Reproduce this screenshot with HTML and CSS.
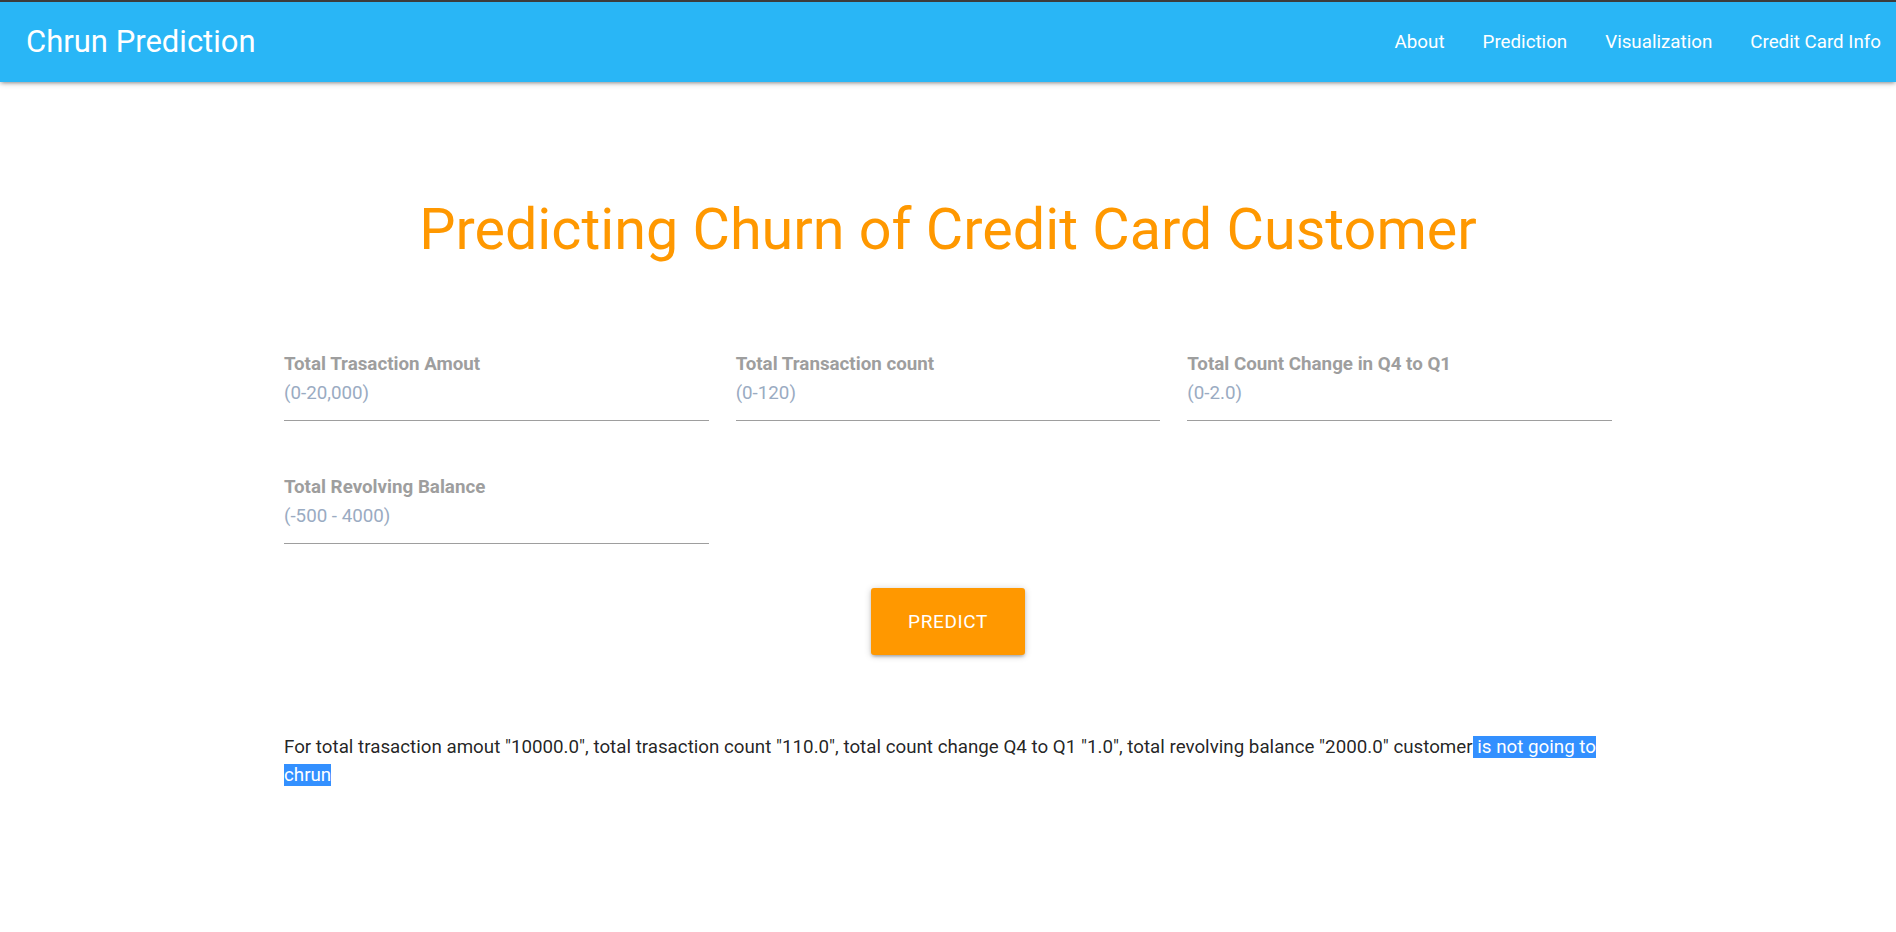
FILE: index.html
```html
<!DOCTYPE html>
<html lang="en">
<head>
<meta charset="utf-8">
<title>Chrun Prediction</title>
<link rel="stylesheet" href="styles.css">
</head>
<body>
<nav class="navbar">
  <a class="brand" href="#">Chrun Prediction</a>
  <ul class="nav-links">
    <li><a href="#">About</a></li>
    <li><a href="#">Prediction</a></li>
    <li><a href="#">Visualization</a></li>
    <li><a href="#">Credit Card Info</a></li>
  </ul>
</nav>
<main class="container">
  <h1 class="title">Predicting Churn of Credit Card Customer</h1>
  <form class="form">
    <div class="field">
      <label class="label" for="amt">Total Trasaction Amout</label>
      <input class="input" id="amt" type="text" placeholder="(0-20,000)">
    </div>
    <div class="field">
      <label class="label" for="cnt">Total Transaction count</label>
      <input class="input" id="cnt" type="text" placeholder="(0-120)">
    </div>
    <div class="field">
      <label class="label" for="chg">Total Count Change in Q4 to Q1</label>
      <input class="input" id="chg" type="text" placeholder="(0-2.0)">
    </div>
    <div class="field">
      <label class="label" for="bal">Total Revolving Balance</label>
      <input class="input" id="bal" type="text" placeholder="(-500 - 4000)">
    </div>
  </form>
  <div class="actions">
    <button class="btn" type="button">Predict</button>
  </div>
  <p class="result">For total trasaction amout "10000.0", total trasaction count "110.0", total count change Q4 to Q1 "1.0", total revolving balance "2000.0" customer<span class="sel"> is not going to chrun</span></p>
</main>
</body>
</html>
```
FILE: styles.css
```css
* { box-sizing: border-box; }
html, body { margin: 0; padding: 0; }
body {
  font-family: Roboto, "Noto Sans", "Liberation Sans", sans-serif;
  background: #fff;
  color: rgba(0,0,0,0.87);
}
.navbar {
  display: flex;
  align-items: center;
  justify-content: space-between;
  height: 82px;
  border-top: 2px solid #3c3c3c;
  background: #29b6f6;
  box-shadow: 0 2px 3px 0 rgba(0,0,0,0.14), 0 4px 2px -3px rgba(0,0,0,0.12), 0 1px 7px 0 rgba(0,0,0,0.2);
  padding: 0 15px 0 26px;
}
.brand {
  color: #fff;
  text-decoration: none;
  font-size: 31px;
  line-height: 80px;
}
.nav-links {
  display: flex;
  list-style: none;
  margin: 0;
  padding: 0;
}
.nav-links a {
  display: block;
  color: #fff;
  text-decoration: none;
  font-size: 18.75px;
  line-height: 80px;
  padding: 0 19px;
}
.nav-links li:last-child a { padding-right: 0; }
.container {
  width: 1328px;
  margin: 0 auto;
  padding-top: 113px;
}
.title {
  margin: 0;
  text-align: center;
  color: #ff9800;
  font-weight: 400;
  font-size: 57.5px;
  line-height: 70px;
}
.form {
  display: grid;
  grid-template-columns: repeat(3, 1fr);
  column-gap: 27px;
  row-gap: 57px;
  margin-top: 90px;
}
.field { display: flex; flex-direction: column; }
.label {
  display: block;
  height: 20px;
  font-size: 18.75px;
  line-height: 19px;
  font-weight: 700;
  color: #9e9e9e;
}
.input {
  width: 100%;
  height: 46px;
  padding: 3px 0 12px;
  border: none;
  border-bottom: 1px solid #9e9e9e;
  background: transparent;
  font-family: Roboto, "Noto Sans", sans-serif;
  font-size: 18.75px;
  line-height: 30px;
  color: rgba(0,0,0,0.87);
  outline: none;
}
.input::placeholder { color: #9aabc2; opacity: 1; }
.actions {
  display: flex;
  justify-content: center;
  margin-top: 44px;
}
.btn {
  width: 154px;
  height: 67px;
  border: none;
  border-radius: 3px;
  background: #ff9800;
  color: #fff;
  font-family: Roboto, "Noto Sans", sans-serif;
  font-size: 19px;
  letter-spacing: 0.6px;
  text-transform: uppercase;
  box-shadow: 0 2px 3px 0 rgba(0,0,0,0.14), 0 4px 2px -3px rgba(0,0,0,0.12), 0 1px 7px 0 rgba(0,0,0,0.2);
  cursor: pointer;
}
.result {
  margin: 78px 0 0;
  font-size: 18.75px;
  line-height: 28px;
}
.sel {
  background: #3390ff;
  color: #fff;
}
```
